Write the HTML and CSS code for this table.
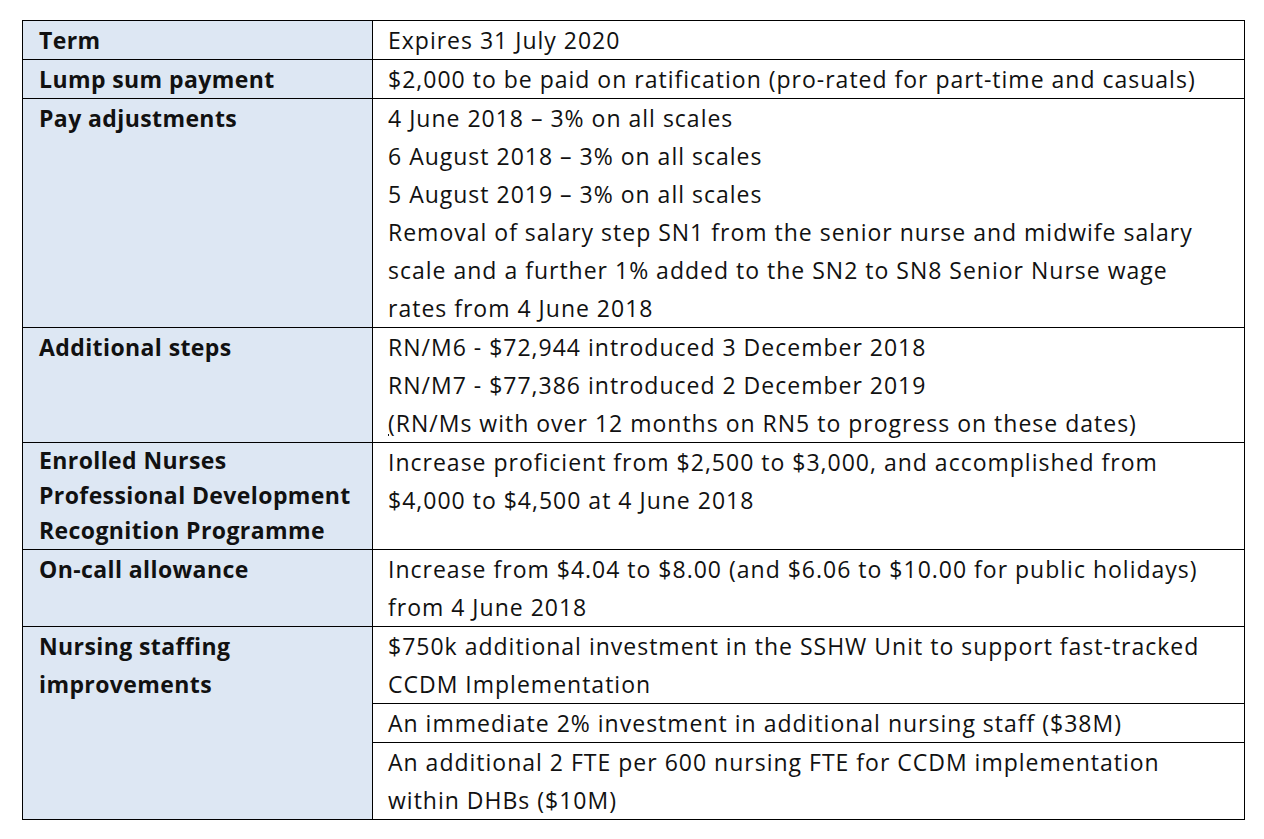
FILE: index.html
```html
<!DOCTYPE html>
<html>
<head>
<meta charset="utf-8">
<link rel="stylesheet" href="styles.css">
</head>
<body>
<table class="terms">
  <colgroup><col class="c-label"><col class="c-value"></colgroup>
  <tr>
    <th>Term</th>
    <td>Expires 31 July 2020</td>
  </tr>
  <tr>
    <th>Lump sum payment</th>
    <td>$2,000 to be paid on ratification (pro-rated for part-time and casuals)</td>
  </tr>
  <tr>
    <th>Pay adjustments</th>
    <td>
      <p>4 June 2018 – 3% on all scales</p>
      <p>6 August 2018 – 3% on all scales</p>
      <p>5 August 2019 – 3% on all scales</p>
      <p>Removal of salary step SN1 from the senior nurse and midwife salary scale and a further 1% added to the SN2 to SN8 Senior Nurse wage rates from 4 June 2018</p>
    </td>
  </tr>
  <tr>
    <th>Additional steps</th>
    <td>
      <p>RN/M6 - $72,944 introduced 3 December 2018</p>
      <p>RN/M7 - $77,386 introduced 2 December 2019</p>
      <p><span class="u">(</span>RN/Ms with over 12 months on RN5 to progress on these dates)</p>
    </td>
  </tr>
  <tr>
    <th class="tight">Enrolled Nurses Professional Development Recognition Programme</th>
    <td>Increase proficient from $2,500 to $3,000, and accomplished from $4,000 to $4,500 at 4 June 2018</td>
  </tr>
  <tr>
    <th>On-call allowance</th>
    <td>Increase from $4.04 to $8.00 (and $6.06 to $10.00 for public holidays) from 4 June 2018</td>
  </tr>
  <tr>
    <th rowspan="3">Nursing staffing improvements</th>
    <td>$750k additional investment in the SSHW Unit to support fast-tracked CCDM Implementation</td>
  </tr>
  <tr>
    <td>An immediate 2% investment in additional nursing staff ($38M)</td>
  </tr>
  <tr>
    <td>An additional 2 FTE per 600 nursing FTE for CCDM implementation within DHBs ($10M)</td>
  </tr>
</table>
</body>
</html>
```

FILE: styles.css
```css
html, body {
  margin: 0;
  padding: 0;
  background: #ffffff;
}
body {
  padding: 20px 0 0 22px;
  font-family: "Open Sans", "Lato", sans-serif;
  font-size: 23px;
  color: #111111;
}
.terms {
  border-collapse: collapse;
  table-layout: fixed;
  width: 1222px;
}
.c-label { width: 350px; }
.c-value { width: 872px; }
.terms th,
.terms td {
  border: 1px solid #000;
  vertical-align: top;
  text-align: left;
  line-height: 38px;
  padding: 0 30px 0 15px;
}
.terms td {
  letter-spacing: 1px;
}
.terms th {
  background: #dde7f3;
  font-weight: 700;
  letter-spacing: 0.4px;
  padding-left: 16px;
  padding-right: 2px;
}
.terms th.tight {
  line-height: 35px;
  padding-bottom: 1px;
}
.terms p {
  margin: 0;
}
.u {
  text-decoration: underline;
}
```
